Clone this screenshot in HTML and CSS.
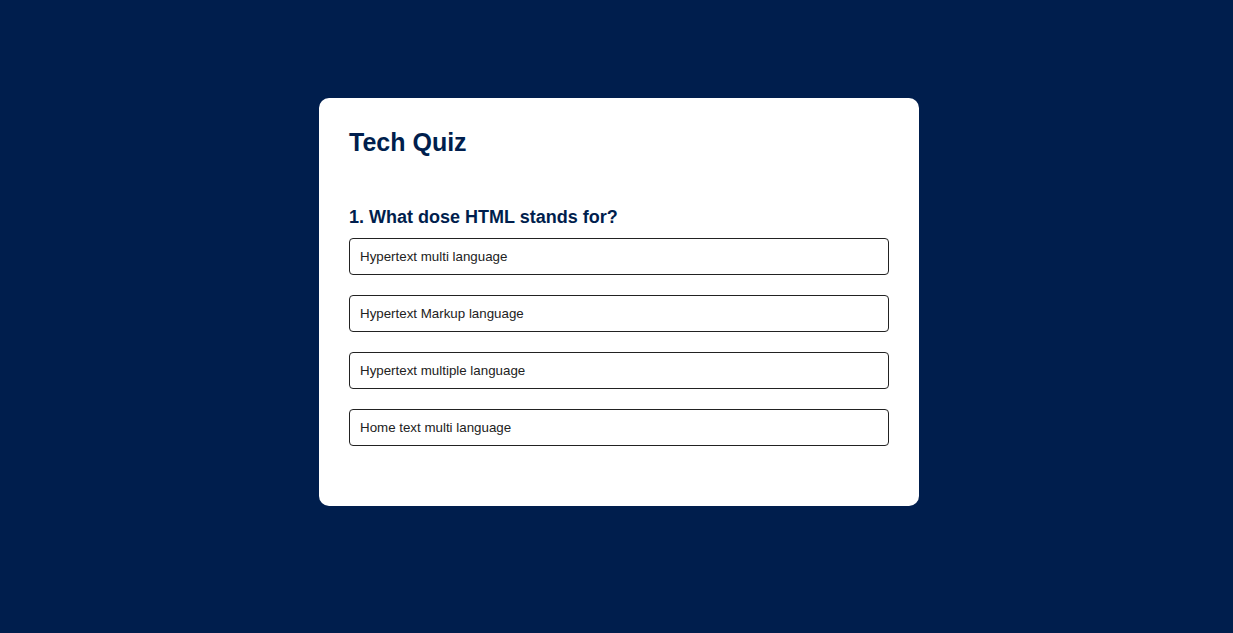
FILE: index.html
```html
<!DOCTYPE html>
<html lang="en">
<head>
<meta charset="utf-8">
<title>Tech Quiz</title>
<link rel="stylesheet" href="styles.css">
</head>
<body>
<div class="app">
  <h1 class="title">Tech Quiz</h1>
  <div class="quiz">
    <h2 class="question">1. What dose HTML stands for?</h2>
    <div class="answers">
      <button class="btn">Hypertext multi language</button>
      <button class="btn">Hypertext Markup language</button>
      <button class="btn">Hypertext multiple language</button>
      <button class="btn">Home text multi language</button>
    </div>
  </div>
</div>
</body>
</html>
```
FILE: styles.css
```css
* {
  margin: 0;
  padding: 0;
  box-sizing: border-box;
}
html, body {
  background: #001e4d;
}
body {
  font-family: "Liberation Sans", Arial, sans-serif;
  padding-left: 5px;
  height: 633px;
  overflow: hidden;
}
.app {
  background: #fff;
  width: 600px;
  margin: 98px auto 0;
  border-radius: 10px;
  padding: 30px;
}
.title {
  font-size: 25px;
  line-height: 29px;
  color: #001e4d;
  font-weight: 700;
  padding-bottom: 30px;
}
.quiz {
  padding: 20px 0;
}
.question {
  font-size: 18px;
  line-height: 21px;
  color: #001e4d;
  font-weight: 700;
}
.answers {
  display: flex;
  flex-direction: column;
  gap: 0;
}
.btn {
  display: block;
  width: 100%;
  background: #fff;
  color: #222;
  font-family: "Liberation Sans", Arial, sans-serif;
  font-size: 13.333px;
  line-height: 15px;
  font-weight: 400;
  border: 1px solid #222;
  border-radius: 4px;
  padding: 10px;
  margin: 10px 0;
  text-align: left;
  cursor: pointer;
}
```
